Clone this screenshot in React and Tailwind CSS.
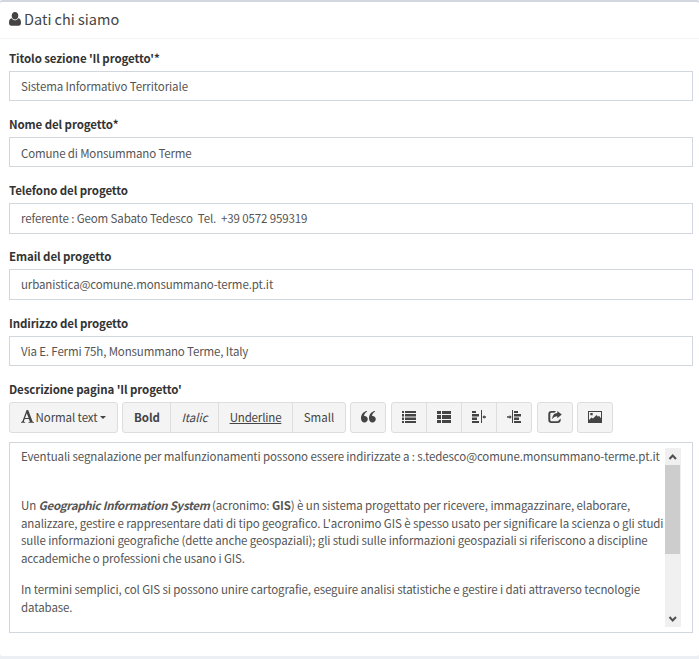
const FIELDS = [
  { label: "Titolo sezione 'Il progetto'*", value: 'Sistema Informativo Territoriale', gap: 'h-[66px]', box: 'h-[30px] pt-px tracking-[-0.1px]' },
  { label: 'Nome del progetto*', value: 'Comune di Monsummano Terme', gap: 'h-[66px]', box: 'h-[30px] pt-[3px] tracking-[-0.16px]' },
  { label: 'Telefono del progetto', value: 'referente : Geom Sabato Tedesco\u00a0 Tel.\u00a0 +39 0572 959319', gap: 'h-[66px]', box: 'h-[31px] pt-px tracking-[-0.13px]' },
  { label: 'Email del progetto', value: 'urbanistica@comune.monsummano-terme.pt.it', gap: 'h-[67px]', box: 'h-[31px] pt-px tracking-[-0.125px]' },
  { label: 'Indirizzo del progetto', value: 'Via E. Fermi 75h, Monsummano Terme, Italy', gap: 'h-[66px]', box: 'h-[30px] pt-px tracking-[-0.145px]' },
];

function Label({ children }) {
  return <label className="block h-5 text-[11.5px] leading-5 font-bold tracking-[-0.1px] text-[#333]">{children}</label>;
}

function Field({ label, value, gap, box }) {
  return (
    <div className={gap}>
      <Label>{label}</Label>
      <div className={`mt-[3px] flex items-center border border-[#d2d6de] px-[11px] text-[11.5px] whitespace-pre text-[#555] ${box}`}>
        {value}
      </div>
    </div>
  );
}

function Group({ children }) {
  return (
    <div className="flex h-[31px] shrink-0 divide-x divide-[#ddd] overflow-hidden rounded-[3px] border border-[#ddd] bg-[#f4f4f4]">
      {children}
    </div>
  );
}

function Button({ className = '', children }) {
  return <button className={`flex items-center justify-center text-[11.5px] text-[#444] ${className}`}>{children}</button>;
}

function Icon({ children }) {
  return (
    <svg width="14" height="14" viewBox="0 0 14 14" fill="currentColor" className="mb-px">
      {children}
    </svg>
  );
}

export default function App() {
  return (
    <div className="h-[659px] w-[699px] overflow-hidden bg-[#ecf0f5] font-['Noto_Sans_CJK_JP',sans-serif]">
      <div className="h-[656px] rounded-[3px] border-t-2 border-[#d2d6de] bg-white">
        <header className="flex h-[37px] items-center border-b border-[#f4f4f4] pb-[2px] pl-[9px] text-[#444]">
          <svg width="12" height="14" viewBox="0 0 12 14" fill="currentColor">
            <path d="M6 0C8 0 9.3 1.5 9.3 3.7S8 7.4 6 7.4 2.7 5.9 2.7 3.7 4 0 6 0Z" />
            <path d="M2.7 6.2C.6 6.5 0 8.600 0 11c0 1.800 1 2.700 2.400 2.700h7.200C11 13.700 12 12.800 12 11c0-2.400-.6-4.500-2.700-4.800C8.400 7.600 7.300 8.200 6 8.200S3.600 7.600 2.700 6.200Z" />
          </svg>
          <h3 className="ml-[3px] text-[14.5px] leading-5">Dati chi siamo</h3>
        </header>

        <main className="pt-[9px] pr-[6px] pl-[9px]">
          {FIELDS.map((f) => (
            <Field key={f.label} {...f} />
          ))}

          <Label>Descrizione pagina 'Il progetto'</Label>
          <div className="mt-[3px] flex">
            <div className="mr-1">
              <Group>
                <Button className="w-[107px]">
                  <svg width="13" height="13" viewBox="0 0 13 13" fill="currentColor" className="mr-[2px] mb-[2px]">
                    <path d="M5.600 0h1.600l4.200 10.900c.3.800.6 1.100 1.600 1.200v.7H7.500v-.7c1.100-.1 1.400-.3 1.100-1.200L7.900 9H3.700L3 10.900c-.3.800.1 1.100 1.200 1.200v.7H0v-.7c.8-.1 1.200-.5 1.500-1.200ZM5.800 3.200 4 8h3.600Z" />
                  </svg>
                  <span className="tracking-[-0.1px]">Normal text</span>
                  <span className="ml-[3px] border-x-[3px] border-t-[3px] border-x-transparent border-t-[#444]" />
                </Button>
              </Group>
            </div>
            <div className="mr-1">
              <Group>
                <Button className="w-[48px] pl-px font-bold">Bold</Button>
                <Button className="w-[48px] italic">Italic</Button>
                <Button className="w-[74px] tracking-[-0.15px] underline">Underline</Button>
                <Button className="w-[52px]">Small</Button>
              </Group>
            </div>
            <div className="mr-[5px]">
              <Group>
                <Button className="w-[34px]">
                  <svg width="15" height="12" viewBox="0 0 15 12" fill="currentColor" className="mb-px">
                    <path id="quote" d="M6 0v.8C4.200 1.600 3.200 3 3.100 5c2-.3 3.700 1.100 3.700 3.100 0 1.900-1.500 3.400-3.300 3.400C1.300 11.500 0 9.800 0 7.300 0 3.500 2.200.7 6 0Z" />
                    <use href="#quote" x="8" />
                  </svg>
                </Button>
              </Group>
            </div>
            <div className="mr-[5px]">
              <Group>
                <Button className="w-[35px]">
                  <Icon>
                    <path d="M0 1h2v2H0zM3 1h11v2H3zM0 4h2v2.500H0zM3 4h11v2.500H3zM0 7.500h2V10H0zM3 7.500h11V10H3zM0 11h2v2H0zM3 11h11v2H3z" />
                  </Icon>
                </Button>
                <Button className="w-[35px]">
                  <Icon>
                    <path d="M0 1h4v3H0zM5 1h9v3H5zM0 5h4v4H0zM5 5h9v4H5zM0 10h4v3H0zM5 10h9v3H5z" />
                  </Icon>
                </Button>
                <Button className="w-[35px]">
                  <Icon>
                    <path d="M0 1h4v2H0zM0 4h7v2.500H0zM0 7.500h5V10H0zM0 11h7v2H0zM9 0h1v13H9zM10.400 7l2-2v1.300h2v1.400h-2V9z" />
                  </Icon>
                </Button>
                <Button className="w-[34px]">
                  <Icon>
                    <path d="M7 1h4v2H7zM7 4h7v2.500H7zM7 7.500h5V10H7zM7 11h7v2H7zM5 0h1v13H5zM4.700 7l-2-2v1.300H0v1.400h2.700V9z" />
                  </Icon>
                </Button>
              </Group>
            </div>
            <div className="mr-1">
              <Group>
                <Button className="w-[34px]">
                  <Icon>
                    <path d="M8 1H3.500Q.3 1 .3 4v6q0 3 3.200 3h6q3.200 0 3.200-3V8.500l-2 1.700q-.2 1.100-1.200 1.100h-6Q2.300 11.300 2.300 10V4q0-1.300 1.200-1.300H6.500Z" />
                    <path d="m9.300 1 4.500 3.600-4.500 3.700V6.200C7 6.200 5.500 7.200 4.200 9.200 4.400 5.600 6 3.300 9.300 3.100Z" />
                  </Icon>
                </Button>
              </Group>
            </div>
            <Group>
              <Button className="w-[34px]">
                <Icon>
                  <path fillRule="evenodd" d="M0 1h14v12H0ZM1 2v8l2.500-2.500 1.500 1L8.500 5l1.500 1.700 1-1 2 2.500V2Z" />
                  <path d="M2.300 3.100h2.400v2.200H2.300z" />
                </Icon>
              </Button>
            </Group>
          </div>

          <section className="mt-[9px] flex h-[191px] border border-[#d2d6de] pt-[5px] pr-[11px] pb-[5px] pl-[11px]">
            <div className="w-[644px] shrink-0 text-[11.5px] leading-[17.8px] whitespace-nowrap text-[#555]">
              <p className="mb-[31px] tracking-[-0.125px]">
                Eventuali segnalazione per malfunzionamenti possono essere indirizzate a : s.tedesco@comune.monsummano-terme.pt.it
              </p>
              <p className="mb-[13px]">
                <span className="tracking-[-0.11px]">Un <b className="tracking-[-0.3px]"><i>Geographic Information System</i></b> (acronimo: <b>GIS</b>) è un sistema progettato per ricevere, immagazzinare, elaborare,</span>
                <br />
                <span className="tracking-[-0.105px]">analizzare, gestire e rappresentare dati di tipo geografico. L'acronimo GIS è spesso usato per significare la scienza o gli studi</span>
                <br />
                <span className="tracking-[-0.113px]">sulle informazioni geografiche (dette anche geospaziali); gli studi sulle informazioni geospaziali si riferiscono a discipline</span>
                <br />
                <span className="tracking-[-0.13px]">accademiche o professioni che usano i GIS.</span>
              </p>
              <p className="tracking-[-0.1px]">
                In termini semplici, col GIS si possono unire cartografie, eseguire analisi statistiche e gestire i dati attraverso tecnologie
                <br />
                database.
              </p>
            </div>
            <div className="flex h-[179px] w-4 shrink-0 flex-col items-center bg-[#f0f0f0] text-[#505050]">
              <svg width="16" height="17" viewBox="0 0 16 17" fill="none" stroke="currentColor" strokeWidth="2">
                <path d="m4.500 11 3.200-3.500L11 11" />
              </svg>
              <div className="mr-px h-[89px] w-[15px] bg-[#cdcdcd]" />
              <svg width="16" height="17" viewBox="0 0 16 17" fill="none" stroke="currentColor" strokeWidth="2" className="mt-auto">
                <path d="m4.500 7 3.200 3.500L11 7" />
              </svg>
            </div>
          </section>
        </main>
      </div>
    </div>
  );
}
